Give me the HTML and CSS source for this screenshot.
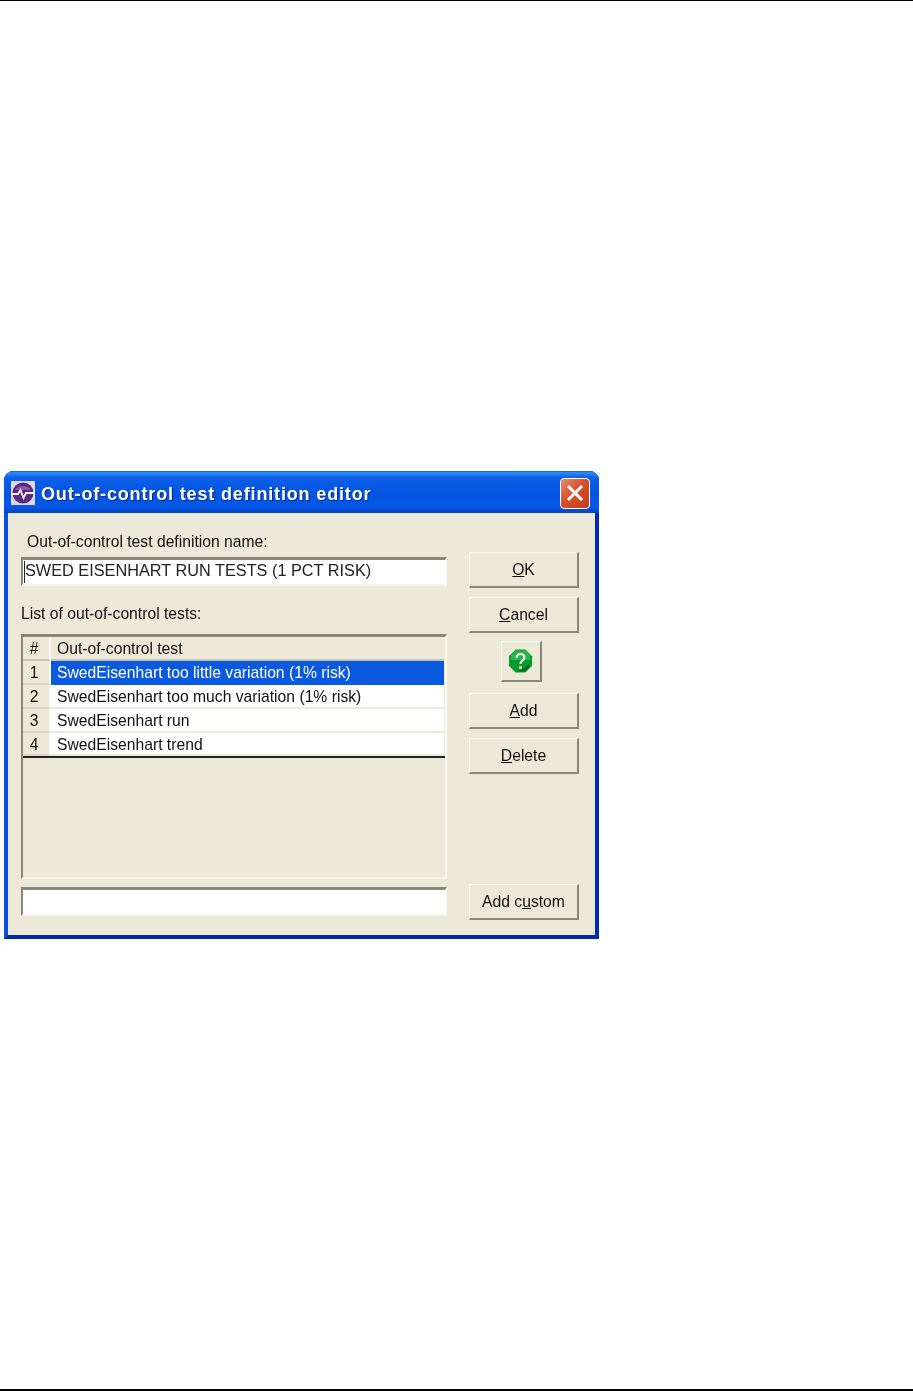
FILE: index.html
```html
<!DOCTYPE html>
<html lang="en">
<head>
<meta charset="utf-8">
<title>Out-of-control test definition editor</title>
<link rel="stylesheet" href="styles.css">
</head>
<body>
<main class="page">
  <section class="dialog">
    <header class="titlebar">
      <svg class="app-icon" width="24" height="24" viewBox="0 0 24 24">
        <rect width="24" height="24" fill="#dcd8e6"/>
        <circle cx="12" cy="12" r="10.5" fill="#5b2a80"/>
        <path d="M4 9a10 10 0 0 1 16 0z" fill="#8a5aa8"/>
        <path d="M0 13h7l2.5-4 3 8 2.5-5h9" fill="none" stroke="#f2eef6" stroke-width="1.8"/>
      </svg>
      <h1 class="title">Out-of-control test definition editor</h1>
      <button class="close" aria-label="Close">
        <svg width="18" height="18" viewBox="0 0 18 18"><path d="M3 3l12 12M15 3L3 15" stroke="#fff" stroke-width="3" stroke-linecap="square"/></svg>
      </button>
    </header>
    <div class="client">
      <div class="main-col">
        <label class="label label-name">Out-of-control test definition name:</label>
        <div class="field field-name"><span class="caret"></span>SWED EISENHART RUN TESTS (1 PCT RISK)</div>
        <label class="label label-list">List of out-of-control tests:</label>
        <div class="grid">
          <div class="row head"><div class="num">#</div><div class="cell">Out-of-control test</div></div>
          <div class="row selected"><div class="num">1</div><div class="cell">SwedEisenhart too little variation (1% risk)</div></div>
          <div class="row"><div class="num">2</div><div class="cell">SwedEisenhart too much variation (1% risk)</div></div>
          <div class="row"><div class="num">3</div><div class="cell">SwedEisenhart run</div></div>
          <div class="row last"><div class="num">4</div><div class="cell">SwedEisenhart trend</div></div>
        </div>
        <div class="field field-custom"></div>
      </div>
      <div class="side-col">
        <button class="btn btn-ok"><u>O</u>K</button>
        <button class="btn btn-cancel"><u>C</u>ancel</button>
        <button class="btn btn-help" aria-label="Help">
          <svg width="25" height="26" viewBox="0 0 26 26">
            <path d="M8 1h10l7 7v10l-7 7H8l-7-7V8z" fill="#0a9a2c"/>
            <path d="M8 2h10l5 5v5H3V7z" fill="#22b84a"/>
            <path d="M8 24h10l4-4v-4L14 22z" fill="#056a1e"/>
            <path d="M9 9.5c0-5 8-5 8 0 0 3-4 3-4 6.5" fill="none" stroke="#fff" stroke-width="2.2"/>
            <rect x="11.7" y="18.5" width="2.6" height="2.6" fill="#fff"/>
          </svg>
        </button>
        <button class="btn btn-add"><u>A</u>dd</button>
        <button class="btn btn-delete"><u>D</u>elete</button>
        <button class="btn btn-custom">Add c<u>u</u>stom</button>
      </div>
    </div>
  </section>
</main>
</body>
</html>
```
FILE: styles.css
```css
* { box-sizing: border-box; }
html, body { margin: 0; padding: 0; background: #fff; }
body { font-family: "Liberation Sans", Arial, sans-serif; }

.page {
  height: 1391px;
  border-top: 1px solid #000;
  border-bottom: 2px solid #000;
  padding: 470px 0 0 4px;
}

.dialog {
  width: 595px;
  height: 468px;
  border-radius: 9px 9px 0 0;
  background: linear-gradient(#0a5ae0, #0a4fd8);
  border: solid #0831d9;
  border-width: 0 4px 4px 4px;
  border-left-color: #0a50e0;
  border-right-color: #0029b8;
  border-bottom-color: #0028a8;
  display: flex;
  flex-direction: column;
  filter: blur(0.45px);
}

.titlebar {
  height: 42px;
  flex: none;
  margin: 0 -4px;
  padding: 2px 9px 0 7px;
  border-radius: 9px 9px 0 0;
  background: linear-gradient(#0a58d8 0, #2f8cf5 4%, #0a5fe6 16%, #0454e2 55%, #0658e8 85%, #0440c0 100%);
  display: flex;
  align-items: center;
}
.app-icon { flex: none; margin-right: 6px; margin-top: -1px; }
.title {
  margin: 2px 0 0;
  flex: 1;
  font: bold 18px "Liberation Sans", sans-serif;
  letter-spacing: 0.85px;
  color: #fff;
  text-shadow: 1px 1px 1px #0a2a80;
  white-space: nowrap;
}
.close {
  width: 30px;
  height: 31px;
  padding: 0;
  border: 1px solid #fff;
  border-radius: 4px;
  background: linear-gradient(135deg, #ea8a6c, #d8502c 45%, #c03c18);
  display: flex;
  align-items: center;
  justify-content: center;
}

.client {
  flex: 1;
  background: #ece9d8;
  padding: 0 15px 0 13px;
  display: flex;
  gap: 22px;
  font-size: 15.7px;
  color: #111;
}

.main-col { width: 426px; display: flex; flex-direction: column; }
.label { display: block; line-height: 18px; }
.label-name { margin: 20px 0 6px 6px; }
.label-list { margin: 19px 0 11px 0; }

.field {
  height: 29px;
  background: #fff;
  border: 2px solid;
  border-color: #8a8778 #fbfaf4 #f6f4e9 #8a8778;
  border-top-width: 3px;
  white-space: nowrap;
  line-height: 21px;
  flex: none;
}
.field-name { padding-left: 2px; font-size: 16.3px; color: #222; position: relative; }
.caret { position: absolute; left: 1px; top: 1px; bottom: 1px; width: 1px; background: #222; }
.field-custom { margin-top: 8px; }

.grid {
  height: 245px;
  flex: none;
  border: 2px solid;
  border-color: #8a8778 #fbfaf4 #f6f4e9 #8a8778;
  border-top-width: 3px;
  background: #ece9d8;
}
.row {
  height: 24px;
  display: flex;
  line-height: 23px;
}
.row.last { height: 25px; border-bottom: 2px solid #222; }
.num {
  width: 28px;
  flex: none;
  text-align: center;
  padding-right: 4px;
  background: #ece9d8;
  border-right: 2px solid #fbfaf4;
  border-bottom: 2px solid #d8d5c4;
}
.cell {
  flex: 1;
  padding-left: 6px;
  margin-right: 1px;
  background: #fff;
  border-bottom: 2px solid #ece9d8;
  white-space: nowrap;
}
.head .num, .head .cell { background: #ece9d8; border-bottom: 2px solid #c8c5b4; }
.selected .cell { background: #0a5ae0; color: #fff; border-bottom: none; }

.side-col { width: 110px; display: flex; flex-direction: column; align-items: center; }
.btn {
  width: 110px;
  height: 36px;
  flex: none;
  padding: 0;
  background: #ece9d8;
  border-style: solid;
  border-width: 1px 2px 2px 1px;
  border-color: #fbfaf4 #8a8778 #8a8778 #fbfaf4;
  font: 15.7px "Liberation Sans", Arial, sans-serif;
  color: #111;
}
.btn-ok { margin-top: 39px; }
.btn-cancel { margin-top: 9px; }
.btn-help {
  width: 41px;
  height: 41px;
  margin: 8px 6px 0 0;
  display: flex;
  align-items: center;
  justify-content: center;
}
.btn-add { margin-top: 11px; }
.btn-delete { margin-top: 9px; }
.btn-custom { margin-top: 110px; }
```
